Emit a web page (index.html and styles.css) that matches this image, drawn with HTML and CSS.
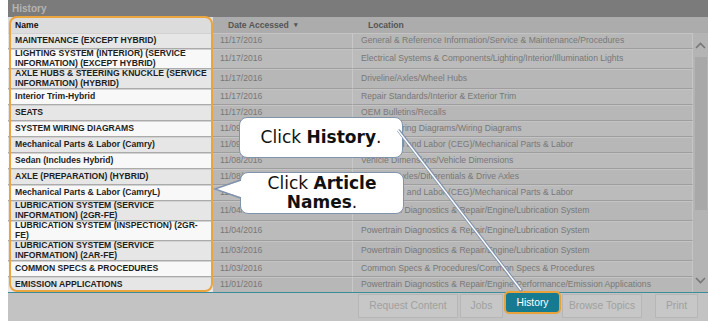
FILE: index.html
```html
<!DOCTYPE html>
<html lang="en">
<head>
    <meta charset="UTF-8">
    <title>History</title>
    <link rel="stylesheet" href="styles.css">
</head>
<body>
    <div class="page">
        <div class="panel">
            <div class="panel-title">History</div>

            <div class="grid-head">
                <div class="head-name">Name</div>
                <div class="head-date">Date Accessed <span class="sort">&#9662;</span></div>
                <div class="head-loc">Location</div>
                <div class="head-scroll"></div>
            </div>

            <div class="grid-body">
                <div class="rows">
                    <div class="row">
                        <div class="cell name">MAINTENANCE (EXCEPT HYBRID)</div>
                        <div class="cell date">11/17/2016</div>
                        <div class="cell loc">General &amp; Reference Information/Service &amp; Maintenance/Procedures</div>
                    </div>
                    <div class="row">
                        <div class="cell name">LIGHTING SYSTEM (INTERIOR) (SERVICE<br>INFORMATION) (EXCEPT HYBRID)</div>
                        <div class="cell date">11/17/2016</div>
                        <div class="cell loc">Electrical Systems &amp; Components/Lighting/Interior/Illumination Lights</div>
                    </div>
                    <div class="row">
                        <div class="cell name">AXLE HUBS &amp; STEERING KNUCKLE (SERVICE<br>INFORMATION) (HYBRID)</div>
                        <div class="cell date">11/17/2016</div>
                        <div class="cell loc">Driveline/Axles/Wheel Hubs</div>
                    </div>
                    <div class="row">
                        <div class="cell name">Interior Trim-Hybrid</div>
                        <div class="cell date">11/17/2016</div>
                        <div class="cell loc">Repair Standards/Interior &amp; Exterior Trim</div>
                    </div>
                    <div class="row">
                        <div class="cell name">SEATS</div>
                        <div class="cell date">11/17/2016</div>
                        <div class="cell loc">OEM Bulletins/Recalls</div>
                    </div>
                    <div class="row">
                        <div class="cell name">SYSTEM WIRING DIAGRAMS</div>
                        <div class="cell date">11/09/2016</div>
                        <div class="cell loc">System Wiring Diagrams/Wiring Diagrams</div>
                    </div>
                    <div class="row">
                        <div class="cell name">Mechanical Parts &amp; Labor (Camry)</div>
                        <div class="cell date">11/09/2016</div>
                        <div class="cell loc">Mechanical and Labor (CEG)/Mechanical Parts &amp; Labor</div>
                    </div>
                    <div class="row">
                        <div class="cell name">Sedan (Includes Hybrid)</div>
                        <div class="cell date">11/08/2016</div>
                        <div class="cell loc">Vehicle Dimensions/Vehicle Dimensions</div>
                    </div>
                    <div class="row">
                        <div class="cell name">AXLE (PREPARATION) (HYBRID)</div>
                        <div class="cell date">11/08/2016</div>
                        <div class="cell loc">Driveline/Axles/Differentials &amp; Drive Axles</div>
                    </div>
                    <div class="row">
                        <div class="cell name">Mechanical Parts &amp; Labor (CamryL)</div>
                        <div class="cell date">11/07/2016</div>
                        <div class="cell loc">Mechanical and Labor (CEG)/Mechanical Parts &amp; Labor</div>
                    </div>
                    <div class="row">
                        <div class="cell name">LUBRICATION SYSTEM (SERVICE<br>INFORMATION) (2GR-FE)</div>
                        <div class="cell date">11/04/2016</div>
                        <div class="cell loc">Powertrain Diagnostics &amp; Repair/Engine/Lubrication System</div>
                    </div>
                    <div class="row">
                        <div class="cell name">LUBRICATION SYSTEM (INSPECTION) (2GR-<br>FE)</div>
                        <div class="cell date">11/04/2016</div>
                        <div class="cell loc">Powertrain Diagnostics &amp; Repair/Engine/Lubrication System</div>
                    </div>
                    <div class="row">
                        <div class="cell name">LUBRICATION SYSTEM (SERVICE<br>INFORMATION) (2AR-FE)</div>
                        <div class="cell date">11/03/2016</div>
                        <div class="cell loc">Powertrain Diagnostics &amp; Repair/Engine/Lubrication System</div>
                    </div>
                    <div class="row">
                        <div class="cell name">COMMON SPECS &amp; PROCEDURES</div>
                        <div class="cell date">11/03/2016</div>
                        <div class="cell loc">Common Specs &amp; Procedures/Common Specs &amp; Procedures</div>
                    </div>
                    <div class="row">
                        <div class="cell name">EMISSION APPLICATIONS</div>
                        <div class="cell date">11/01/2016</div>
                        <div class="cell loc">Powertrain Diagnostics &amp; Repair/Engine Performance/Emission Applications</div>
                    </div>
                </div>

                <div class="scrollbar">
                    <div class="scroll-btn">
                        <svg width="11" height="7" viewBox="0 0 11 7"><polyline points="1,6 5.5,1.5 10,6" fill="none" stroke="#777" stroke-width="1.6"/></svg>
                    </div>
                    <div class="scroll-thumb"></div>
                    <div class="scroll-space"></div>
                    <div class="scroll-btn">
                        <svg width="11" height="7" viewBox="0 0 11 7"><polyline points="1,1 5.5,5.5 10,1" fill="none" stroke="#777" stroke-width="1.6"/></svg>
                    </div>
                </div>
            </div>

            <div class="toolbar">
                <div class="tool-btn btn-request">Request Content</div>
                <div class="tool-btn btn-jobs">Jobs</div>
                <div class="tool-btn btn-history">History</div>
                <div class="tool-btn btn-browse">Browse Topics</div>
                <div class="tool-btn btn-print">Print</div>
            </div>
        </div>

        <!-- tutorial overlay -->
        <div class="name-frame"></div>
        <div class="callout callout-history">Click <b>History</b>.</div>
        <div class="callout callout-names">Click <b>Article</b><br><b>Names</b>.</div>
        <svg class="pointers" width="708" height="321" viewBox="0 0 708 321">
            <polygon points="244,180 215,189 244,198" fill="#fff"/>
            <polyline points="240.5,180 215,189 240.5,198" fill="none" stroke="#8093ad" stroke-width="1.4"/>
            <line x1="399" y1="131" x2="521" y2="290" stroke="#8093ad" stroke-width="3.4" stroke-linecap="round"/>
            <line x1="397" y1="129" x2="521" y2="290" stroke="#fff" stroke-width="1.4"/>
        </svg>
    </div>
</body>
</html>
```

FILE: styles.css
```css
body {
    margin: 0;
    background-color: white;
    font-family: "Liberation Sans", Arial, sans-serif;
}

.page {
    position: relative;
    width: 708px;
    height: 321px;
    overflow: hidden;
}

.panel {
    margin-left: 8px;
    width: 700px;
    height: 321px;
    display: flex;
    flex-direction: column;
    background-color: #c3c3c3;
}

.panel-title {
    height: 17px;
    line-height: 17px;
    padding-left: 4px;
    background-color: #7b7b7b;
    color: #b4b4b4;
    font-size: 10px;
    font-weight: bold;
}

/* column headers */
.grid-head {
    display: flex;
    height: 16px;
    font-size: 8.6px;
    font-weight: bold;
}

.grid-head > div {
    box-sizing: border-box;
    display: flex;
    align-items: center;
    background-color: #acacac;
    color: #555;
}

.head-name {
    width: 205px;
    padding-left: 7px;
    background-color: #dcdcdc !important;
    color: #111 !important;
}

.head-date {
    width: 139px;
    padding-left: 15px;
}

.sort {
    margin-left: 5px;
    font-size: 7px;
}

.head-loc {
    width: 341px;
    padding-left: 16px;
}

.head-scroll {
    flex: 1;
}

/* rows */
.grid-body {
    display: flex;
    height: 259px;
    overflow: hidden;
}

.rows {
    width: 685px;
}

.row {
    display: flex;
}

.cell {
    box-sizing: border-box;
    min-height: 16px;
    display: flex;
    align-items: center;
    font-size: 8.6px;
    line-height: 9.5px;
    border-bottom: 1px solid #9e9e9e;
    white-space: nowrap;
}

.name {
    width: 205px;
    padding-left: 7px;
    font-weight: bold;
    color: #1e1e1e;
    background-color: #e6e6e6;
    border-bottom-color: #ababab;
    box-shadow: inset 0 1px 0 #d2d2d2;
}

.row:nth-child(even) .name {
    background-color: #f8f8f8;
}

.date {
    width: 139px;
    padding-left: 7px;
    color: #777;
    background-color: #b7b7b7;
    box-shadow: inset 0 1px 0 #c4c4c4;
}

.loc {
    width: 341px;
    padding-left: 8px;
    color: #777;
    background-color: #b7b7b7;
    border-left: 1px solid #c8c8c8;
    border-right: 1px solid #c6c6c6;
    box-shadow: inset 0 1px 0 #c4c4c4;
}

.row:nth-child(even) .date,
.row:nth-child(even) .loc {
    background-color: #bbbbbb;
}

/* scrollbar */
.scrollbar {
    flex: 1;
    display: flex;
    flex-direction: column;
    align-items: center;
    background-color: #b4b4b4;
}

.scroll-btn {
    height: 24px;
    display: flex;
    align-items: center;
    justify-content: center;
}

.scroll-thumb {
    width: 12px;
    height: 153px;
    background-color: #a8a8a8;
}

.scroll-space {
    flex: 1;
}

/* bottom toolbar */
.toolbar {
    box-sizing: border-box;
    height: 29px;
    border-top: 1px solid #3b8b9a;
    padding: 1px 10px 0 0;
    display: flex;
    justify-content: flex-end;
    align-items: flex-start;
    gap: 2px;
}

.tool-btn {
    box-sizing: border-box;
    height: 24px;
    line-height: 22px;
    text-align: center;
    font-size: 10.3px;
    color: #a0a0a0;
    background-color: #c7c7c7;
    border: 1px solid #b6b6b6;
}

.btn-request {
    width: 100px;
}

.btn-jobs {
    width: 43px;
}

.btn-history {
    width: 57px;
    height: 23px;
    line-height: 19px;
    margin: -3px -1px 0;
    color: white;
    background-color: #167b91;
    border: 2px solid #e8a23c;
    border-radius: 5px;
}

.btn-browse {
    width: 80px;
}

.btn-print {
    width: 43px;
    margin-left: 11px;
}

/* tutorial overlay */
.name-frame {
    position: absolute;
    left: 9px;
    top: 16px;
    width: 204px;
    height: 276px;
    box-sizing: border-box;
    border: 2px solid #eaa53f;
    border-radius: 8px;
}

.callout {
    position: absolute;
    box-sizing: border-box;
    width: 164px;
    background-color: white;
    border: 1.5px solid #8093ad;
    border-radius: 8px;
    font-family: "DejaVu Sans", Verdana, sans-serif;
    font-size: 17px;
    color: #111;
    text-align: center;
}

.callout-history {
    left: 239px;
    top: 117px;
    height: 41px;
    line-height: 38px;
}

.callout-names {
    left: 240px;
    top: 172px;
    height: 42px;
    padding-top: 1px;
    line-height: 19px;
}

.pointers {
    position: absolute;
    left: 0;
    top: 0;
    pointer-events: none;
}
```
